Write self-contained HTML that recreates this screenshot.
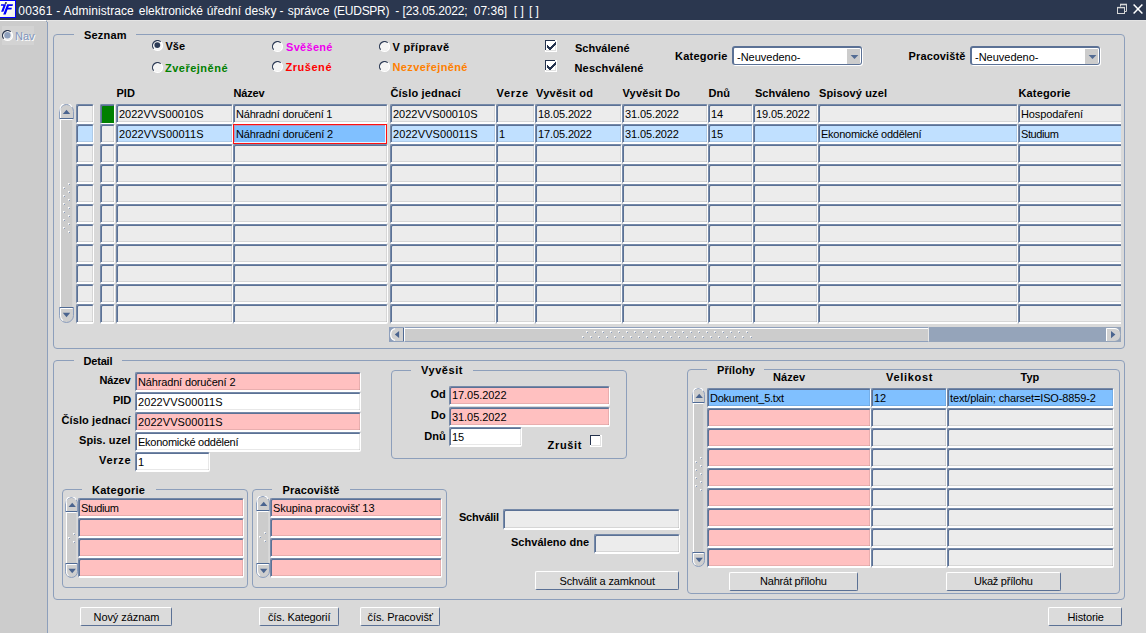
<!DOCTYPE html>
<html lang="cs"><head><meta charset="utf-8"><title>00361 - Administrace elektronické úřední desky</title>
<style>
html,body{margin:0;padding:0}
body{width:1146px;height:633px;overflow:hidden;background:#d9d9d9;position:relative;font-family:"Liberation Sans",sans-serif;}
div,svg,span{position:absolute;}
.f{box-sizing:border-box;border-style:solid;border-width:1px 1px 2px 1px;border-color:#7589a8 #fff #fff #7589a8;box-shadow:inset 1px 1px 0 #5b7195,inset -1px 0 0 rgba(0,0,0,.09),inset 0 -1px 0 rgba(0,0,0,.09);border-radius:2px;}
.g{box-sizing:border-box;border:1px solid #8d9fbb;border-radius:4px;}
.b{box-sizing:border-box;background:#dbdbdb;border-top:1px solid #fff;border-left:1px solid #fff;border-right:1px solid #5b7195;border-bottom:1px solid #5b7195;border-radius:2px;}
.cb{box-sizing:border-box;background:#fff;border-style:solid;border-color:#5b7195;border-width:2px 1px 1px 2px;border-radius:3px;box-shadow:1px 1px 0 #fff;}
.cbb{right:1px;top:1px;width:13px;height:15px;background:#cccccc;}
.t{white-space:pre;line-height:20px;height:20px;}
</style></head>
<body>
<div style="left:0px;top:0px;width:1146px;height:20px;background:#2b374f"></div>
<svg style="left:0;top:0" width="17" height="19" viewBox="0 0 17 19"><defs><linearGradient id="ig" x1="0" y1="0" x2="1" y2="1"><stop offset="0" stop-color="#fffff2"/><stop offset=".55" stop-color="#fdfdf0"/><stop offset="1" stop-color="#eeeeee"/></linearGradient></defs><rect x="0" y="0" width="16" height="18" fill="#0000ff"/><rect x="0" y="1" width="15" height="16" fill="url(#ig)"/><path d="M1.1 4.3 H6.1 L5.6 5.7 H0.8 Z M3.9 4.6 H6 L3.4 11.7 H1.1 Z" fill="#0000ff"/><path d="M5.1 2.2 H6.9 L6.5 3.7 H4.7 Z" fill="#00003a"/><path d="M7.3 4.2 H13 L12.5 5.9 H6.7 Z M7.2 4.2 H9.5 L5.7 14.6 H3.2 Z M6.5 7.8 H11.9 L11.4 9.4 H5.9 Z" fill="#0000ff"/></svg>
<svg style="left:1116px;top:3px" width="28" height="13" viewBox="0 0 28 13"><path d="M4.5 3.5 V1.5 H10.5 V8.5 H8.5" stroke="#d6d6d6" stroke-width="1" fill="none"/><path d="M4 1.5 H11" stroke="#d6d6d6" stroke-width="1.6"/><rect x="1.5" y="4.5" width="7" height="6" stroke="#d6d6d6" stroke-width="1" fill="none"/><path d="M1 4.6 H9" stroke="#d6d6d6" stroke-width="1.4"/><path d="M17.6 1.4 L26.4 10.6 M26.4 1.4 L17.6 10.6" stroke="#fff" stroke-width="1.5" fill="none"/></svg>
<div style="left:0px;top:20px;width:47px;height:613px;background:#cccccc"></div>
<div style="left:0px;top:20px;width:46px;height:1px;background:#fff"></div>
<div style="left:47px;top:20px;width:1099px;height:1px;background:#e4e4e4"></div>
<div style="left:47px;top:22px;width:1px;height:611px;background:#8d9fbb"></div>
<div style="left:46px;top:21px;width:1px;height:1px;background:#8d9fbb"></div>
<div style="left:2px;top:26px;width:32px;height:19px;background:#d3d3d3"></div>
<svg style="left:2px;top:30px" width="12" height="12" viewBox="0 0 12 12"><circle cx="5.5" cy="5.5" r="4.6" fill="#f2f2f2"/><path d="M8.71 1.67 A5 5 0 1 1 1.67 8.71" fill="none" stroke="#fff" stroke-width="1.2"/><path d="M1.67 8.71 A5 5 0 0 1 8.71 1.67" fill="none" stroke="#24324d" stroke-width="1.15"/><circle cx="5.4" cy="5.3" r="3.2" fill="#8fa1be"/></svg>
<div class="g" style="left:53px;top:34px;width:1072px;height:315px"></div>
<div style="left:74px;top:34px;width:62px;height:2px;background:#d9d9d9"></div>
<svg style="left:152px;top:40px" width="12" height="12" viewBox="0 0 12 12"><circle cx="5.5" cy="5.5" r="4.6" fill="#f4f4f4"/><path d="M8.71 1.67 A5 5 0 1 1 1.67 8.71" fill="none" stroke="#fff" stroke-width="1.2"/><path d="M1.67 8.71 A5 5 0 0 1 8.71 1.67" fill="none" stroke="#2b3a55" stroke-width="1.15"/><circle cx="5.3" cy="5.1" r="2.95" fill="#2b3a55"/></svg>
<svg style="left:152px;top:62px" width="12" height="12" viewBox="0 0 12 12"><circle cx="5.5" cy="5.5" r="4.6" fill="#f4f4f4"/><path d="M8.71 1.67 A5 5 0 1 1 1.67 8.71" fill="none" stroke="#fff" stroke-width="1.2"/><path d="M1.67 8.71 A5 5 0 0 1 8.71 1.67" fill="none" stroke="#2b3a55" stroke-width="1.15"/></svg>
<svg style="left:272px;top:41px" width="12" height="12" viewBox="0 0 12 12"><circle cx="5.5" cy="5.5" r="4.6" fill="#f4f4f4"/><path d="M8.71 1.67 A5 5 0 1 1 1.67 8.71" fill="none" stroke="#fff" stroke-width="1.2"/><path d="M1.67 8.71 A5 5 0 0 1 8.71 1.67" fill="none" stroke="#2b3a55" stroke-width="1.15"/></svg>
<svg style="left:272px;top:61px" width="12" height="12" viewBox="0 0 12 12"><circle cx="5.5" cy="5.5" r="4.6" fill="#f4f4f4"/><path d="M8.71 1.67 A5 5 0 1 1 1.67 8.71" fill="none" stroke="#fff" stroke-width="1.2"/><path d="M1.67 8.71 A5 5 0 0 1 8.71 1.67" fill="none" stroke="#2b3a55" stroke-width="1.15"/></svg>
<svg style="left:379px;top:41px" width="12" height="12" viewBox="0 0 12 12"><circle cx="5.5" cy="5.5" r="4.6" fill="#f4f4f4"/><path d="M8.71 1.67 A5 5 0 1 1 1.67 8.71" fill="none" stroke="#fff" stroke-width="1.2"/><path d="M1.67 8.71 A5 5 0 0 1 8.71 1.67" fill="none" stroke="#2b3a55" stroke-width="1.15"/></svg>
<svg style="left:379px;top:61px" width="12" height="12" viewBox="0 0 12 12"><circle cx="5.5" cy="5.5" r="4.6" fill="#f4f4f4"/><path d="M8.71 1.67 A5 5 0 1 1 1.67 8.71" fill="none" stroke="#fff" stroke-width="1.2"/><path d="M1.67 8.71 A5 5 0 0 1 8.71 1.67" fill="none" stroke="#2b3a55" stroke-width="1.15"/></svg>
<svg style="left:545px;top:40px" width="12" height="12" viewBox="0 0 12 12" shape-rendering="crispEdges"><rect x="0" y="0" width="12" height="12" fill="#fff"/><rect x="1" y="10" width="10" height="1" fill="#e2e2e2"/><rect x="10" y="1" width="1" height="10" fill="#e2e2e2"/><rect x="0" y="0" width="10" height="1" fill="#24324d"/><rect x="0" y="0" width="1" height="10" fill="#24324d"/><rect x="2" y="5" width="1" height="3" fill="#24324d"/><rect x="3" y="6" width="1" height="3" fill="#24324d"/><rect x="4" y="7" width="1" height="3" fill="#24324d"/><rect x="5" y="7" width="1" height="3" fill="#24324d"/><rect x="6" y="6" width="1" height="3" fill="#24324d"/><rect x="7" y="5" width="1" height="3" fill="#24324d"/><rect x="8" y="4" width="1" height="3" fill="#24324d"/><rect x="9" y="3" width="1" height="3" fill="#24324d"/><rect x="10" y="2" width="1" height="3" fill="#24324d"/></svg>
<svg style="left:545px;top:60px" width="12" height="12" viewBox="0 0 12 12" shape-rendering="crispEdges"><rect x="0" y="0" width="12" height="12" fill="#fff"/><rect x="1" y="10" width="10" height="1" fill="#e2e2e2"/><rect x="10" y="1" width="1" height="10" fill="#e2e2e2"/><rect x="0" y="0" width="10" height="1" fill="#24324d"/><rect x="0" y="0" width="1" height="10" fill="#24324d"/><rect x="2" y="5" width="1" height="3" fill="#24324d"/><rect x="3" y="6" width="1" height="3" fill="#24324d"/><rect x="4" y="7" width="1" height="3" fill="#24324d"/><rect x="5" y="7" width="1" height="3" fill="#24324d"/><rect x="6" y="6" width="1" height="3" fill="#24324d"/><rect x="7" y="5" width="1" height="3" fill="#24324d"/><rect x="8" y="4" width="1" height="3" fill="#24324d"/><rect x="9" y="3" width="1" height="3" fill="#24324d"/><rect x="10" y="2" width="1" height="3" fill="#24324d"/></svg>
<div class="cb" style="left:732px;top:46px;width:130px;height:19px"><div class="cbb"><svg width="13" height="15" viewBox="0 0 13 15" style="left:0;top:0"><path d="M3.6 6 H11.4 L7.5 10.1 Z" fill="#536c94"/></svg></div></div>
<div class="cb" style="left:970px;top:46px;width:130px;height:19px"><div class="cbb"><svg width="13" height="15" viewBox="0 0 13 15" style="left:0;top:0"><path d="M3.6 6 H11.4 L7.5 10.1 Z" fill="#536c94"/></svg></div></div>
<div class="f" style="left:76px;top:104px;width:18px;height:20px;background:#ececec"></div>
<div class="f" style="left:100px;top:104px;width:15px;height:20px;background:#008000;box-shadow:inset 1px 1px 0 #5b7195;border-bottom-width:1px"></div>
<div class="f" style="left:116px;top:104px;width:117px;height:20px;background:#ececec"></div>
<div class="f" style="left:233px;top:104px;width:155px;height:20px;background:#ececec"></div>
<div class="f" style="left:390px;top:104px;width:106px;height:20px;background:#ececec"></div>
<div class="f" style="left:496px;top:104px;width:39px;height:20px;background:#ececec"></div>
<div class="f" style="left:535px;top:104px;width:87px;height:20px;background:#ececec"></div>
<div class="f" style="left:622px;top:104px;width:86px;height:20px;background:#ececec"></div>
<div class="f" style="left:708px;top:104px;width:45px;height:20px;background:#ececec"></div>
<div class="f" style="left:753px;top:104px;width:65px;height:20px;background:#ececec"></div>
<div class="f" style="left:818px;top:104px;width:200px;height:20px;background:#ececec"></div>
<div style="left:1018px;top:104px;width:103px;height:20px;overflow:hidden"><div class="f" style="left:0;top:0;width:120px;height:20px;background:#ececec"></div></div>
<div class="f" style="left:76px;top:124px;width:18px;height:20px;background:#c0e0ff"></div>
<div class="f" style="left:100px;top:124px;width:15px;height:20px;background:#ececec"></div>
<div class="f" style="left:116px;top:124px;width:117px;height:20px;background:#c0e0ff"></div>
<div style="left:233px;top:124px;width:154px;height:20px;background:#80c0ff;box-sizing:border-box;border:1px solid #ff1010;box-shadow:inset -1px -1px 0 #eaf4ff,inset 1px 1px 0 rgba(255,80,80,.35)"></div>
<div class="f" style="left:390px;top:124px;width:106px;height:20px;background:#c0e0ff"></div>
<div class="f" style="left:496px;top:124px;width:39px;height:20px;background:#c0e0ff"></div>
<div class="f" style="left:535px;top:124px;width:87px;height:20px;background:#c0e0ff"></div>
<div class="f" style="left:622px;top:124px;width:86px;height:20px;background:#c0e0ff"></div>
<div class="f" style="left:708px;top:124px;width:45px;height:20px;background:#c0e0ff"></div>
<div class="f" style="left:753px;top:124px;width:65px;height:20px;background:#c0e0ff"></div>
<div class="f" style="left:818px;top:124px;width:200px;height:20px;background:#c0e0ff"></div>
<div style="left:1018px;top:124px;width:103px;height:20px;overflow:hidden"><div class="f" style="left:0;top:0;width:120px;height:20px;background:#c0e0ff"></div></div>
<div class="f" style="left:76px;top:144px;width:18px;height:20px;background:#ececec"></div>
<div class="f" style="left:100px;top:144px;width:15px;height:20px;background:#ececec"></div>
<div class="f" style="left:116px;top:144px;width:117px;height:20px;background:#ececec"></div>
<div class="f" style="left:233px;top:144px;width:155px;height:20px;background:#ececec"></div>
<div class="f" style="left:390px;top:144px;width:106px;height:20px;background:#ececec"></div>
<div class="f" style="left:496px;top:144px;width:39px;height:20px;background:#ececec"></div>
<div class="f" style="left:535px;top:144px;width:87px;height:20px;background:#ececec"></div>
<div class="f" style="left:622px;top:144px;width:86px;height:20px;background:#ececec"></div>
<div class="f" style="left:708px;top:144px;width:45px;height:20px;background:#ececec"></div>
<div class="f" style="left:753px;top:144px;width:65px;height:20px;background:#ececec"></div>
<div class="f" style="left:818px;top:144px;width:200px;height:20px;background:#ececec"></div>
<div style="left:1018px;top:144px;width:103px;height:20px;overflow:hidden"><div class="f" style="left:0;top:0;width:120px;height:20px;background:#ececec"></div></div>
<div class="f" style="left:76px;top:164px;width:18px;height:20px;background:#ececec"></div>
<div class="f" style="left:100px;top:164px;width:15px;height:20px;background:#ececec"></div>
<div class="f" style="left:116px;top:164px;width:117px;height:20px;background:#ececec"></div>
<div class="f" style="left:233px;top:164px;width:155px;height:20px;background:#ececec"></div>
<div class="f" style="left:390px;top:164px;width:106px;height:20px;background:#ececec"></div>
<div class="f" style="left:496px;top:164px;width:39px;height:20px;background:#ececec"></div>
<div class="f" style="left:535px;top:164px;width:87px;height:20px;background:#ececec"></div>
<div class="f" style="left:622px;top:164px;width:86px;height:20px;background:#ececec"></div>
<div class="f" style="left:708px;top:164px;width:45px;height:20px;background:#ececec"></div>
<div class="f" style="left:753px;top:164px;width:65px;height:20px;background:#ececec"></div>
<div class="f" style="left:818px;top:164px;width:200px;height:20px;background:#ececec"></div>
<div style="left:1018px;top:164px;width:103px;height:20px;overflow:hidden"><div class="f" style="left:0;top:0;width:120px;height:20px;background:#ececec"></div></div>
<div class="f" style="left:76px;top:184px;width:18px;height:20px;background:#ececec"></div>
<div class="f" style="left:100px;top:184px;width:15px;height:20px;background:#ececec"></div>
<div class="f" style="left:116px;top:184px;width:117px;height:20px;background:#ececec"></div>
<div class="f" style="left:233px;top:184px;width:155px;height:20px;background:#ececec"></div>
<div class="f" style="left:390px;top:184px;width:106px;height:20px;background:#ececec"></div>
<div class="f" style="left:496px;top:184px;width:39px;height:20px;background:#ececec"></div>
<div class="f" style="left:535px;top:184px;width:87px;height:20px;background:#ececec"></div>
<div class="f" style="left:622px;top:184px;width:86px;height:20px;background:#ececec"></div>
<div class="f" style="left:708px;top:184px;width:45px;height:20px;background:#ececec"></div>
<div class="f" style="left:753px;top:184px;width:65px;height:20px;background:#ececec"></div>
<div class="f" style="left:818px;top:184px;width:200px;height:20px;background:#ececec"></div>
<div style="left:1018px;top:184px;width:103px;height:20px;overflow:hidden"><div class="f" style="left:0;top:0;width:120px;height:20px;background:#ececec"></div></div>
<div class="f" style="left:76px;top:204px;width:18px;height:20px;background:#ececec"></div>
<div class="f" style="left:100px;top:204px;width:15px;height:20px;background:#ececec"></div>
<div class="f" style="left:116px;top:204px;width:117px;height:20px;background:#ececec"></div>
<div class="f" style="left:233px;top:204px;width:155px;height:20px;background:#ececec"></div>
<div class="f" style="left:390px;top:204px;width:106px;height:20px;background:#ececec"></div>
<div class="f" style="left:496px;top:204px;width:39px;height:20px;background:#ececec"></div>
<div class="f" style="left:535px;top:204px;width:87px;height:20px;background:#ececec"></div>
<div class="f" style="left:622px;top:204px;width:86px;height:20px;background:#ececec"></div>
<div class="f" style="left:708px;top:204px;width:45px;height:20px;background:#ececec"></div>
<div class="f" style="left:753px;top:204px;width:65px;height:20px;background:#ececec"></div>
<div class="f" style="left:818px;top:204px;width:200px;height:20px;background:#ececec"></div>
<div style="left:1018px;top:204px;width:103px;height:20px;overflow:hidden"><div class="f" style="left:0;top:0;width:120px;height:20px;background:#ececec"></div></div>
<div class="f" style="left:76px;top:224px;width:18px;height:20px;background:#ececec"></div>
<div class="f" style="left:100px;top:224px;width:15px;height:20px;background:#ececec"></div>
<div class="f" style="left:116px;top:224px;width:117px;height:20px;background:#ececec"></div>
<div class="f" style="left:233px;top:224px;width:155px;height:20px;background:#ececec"></div>
<div class="f" style="left:390px;top:224px;width:106px;height:20px;background:#ececec"></div>
<div class="f" style="left:496px;top:224px;width:39px;height:20px;background:#ececec"></div>
<div class="f" style="left:535px;top:224px;width:87px;height:20px;background:#ececec"></div>
<div class="f" style="left:622px;top:224px;width:86px;height:20px;background:#ececec"></div>
<div class="f" style="left:708px;top:224px;width:45px;height:20px;background:#ececec"></div>
<div class="f" style="left:753px;top:224px;width:65px;height:20px;background:#ececec"></div>
<div class="f" style="left:818px;top:224px;width:200px;height:20px;background:#ececec"></div>
<div style="left:1018px;top:224px;width:103px;height:20px;overflow:hidden"><div class="f" style="left:0;top:0;width:120px;height:20px;background:#ececec"></div></div>
<div class="f" style="left:76px;top:244px;width:18px;height:20px;background:#ececec"></div>
<div class="f" style="left:100px;top:244px;width:15px;height:20px;background:#ececec"></div>
<div class="f" style="left:116px;top:244px;width:117px;height:20px;background:#ececec"></div>
<div class="f" style="left:233px;top:244px;width:155px;height:20px;background:#ececec"></div>
<div class="f" style="left:390px;top:244px;width:106px;height:20px;background:#ececec"></div>
<div class="f" style="left:496px;top:244px;width:39px;height:20px;background:#ececec"></div>
<div class="f" style="left:535px;top:244px;width:87px;height:20px;background:#ececec"></div>
<div class="f" style="left:622px;top:244px;width:86px;height:20px;background:#ececec"></div>
<div class="f" style="left:708px;top:244px;width:45px;height:20px;background:#ececec"></div>
<div class="f" style="left:753px;top:244px;width:65px;height:20px;background:#ececec"></div>
<div class="f" style="left:818px;top:244px;width:200px;height:20px;background:#ececec"></div>
<div style="left:1018px;top:244px;width:103px;height:20px;overflow:hidden"><div class="f" style="left:0;top:0;width:120px;height:20px;background:#ececec"></div></div>
<div class="f" style="left:76px;top:264px;width:18px;height:20px;background:#ececec"></div>
<div class="f" style="left:100px;top:264px;width:15px;height:20px;background:#ececec"></div>
<div class="f" style="left:116px;top:264px;width:117px;height:20px;background:#ececec"></div>
<div class="f" style="left:233px;top:264px;width:155px;height:20px;background:#ececec"></div>
<div class="f" style="left:390px;top:264px;width:106px;height:20px;background:#ececec"></div>
<div class="f" style="left:496px;top:264px;width:39px;height:20px;background:#ececec"></div>
<div class="f" style="left:535px;top:264px;width:87px;height:20px;background:#ececec"></div>
<div class="f" style="left:622px;top:264px;width:86px;height:20px;background:#ececec"></div>
<div class="f" style="left:708px;top:264px;width:45px;height:20px;background:#ececec"></div>
<div class="f" style="left:753px;top:264px;width:65px;height:20px;background:#ececec"></div>
<div class="f" style="left:818px;top:264px;width:200px;height:20px;background:#ececec"></div>
<div style="left:1018px;top:264px;width:103px;height:20px;overflow:hidden"><div class="f" style="left:0;top:0;width:120px;height:20px;background:#ececec"></div></div>
<div class="f" style="left:76px;top:284px;width:18px;height:20px;background:#ececec"></div>
<div class="f" style="left:100px;top:284px;width:15px;height:20px;background:#ececec"></div>
<div class="f" style="left:116px;top:284px;width:117px;height:20px;background:#ececec"></div>
<div class="f" style="left:233px;top:284px;width:155px;height:20px;background:#ececec"></div>
<div class="f" style="left:390px;top:284px;width:106px;height:20px;background:#ececec"></div>
<div class="f" style="left:496px;top:284px;width:39px;height:20px;background:#ececec"></div>
<div class="f" style="left:535px;top:284px;width:87px;height:20px;background:#ececec"></div>
<div class="f" style="left:622px;top:284px;width:86px;height:20px;background:#ececec"></div>
<div class="f" style="left:708px;top:284px;width:45px;height:20px;background:#ececec"></div>
<div class="f" style="left:753px;top:284px;width:65px;height:20px;background:#ececec"></div>
<div class="f" style="left:818px;top:284px;width:200px;height:20px;background:#ececec"></div>
<div style="left:1018px;top:284px;width:103px;height:20px;overflow:hidden"><div class="f" style="left:0;top:0;width:120px;height:20px;background:#ececec"></div></div>
<div class="f" style="left:76px;top:304px;width:18px;height:20px;background:#ececec"></div>
<div class="f" style="left:100px;top:304px;width:15px;height:20px;background:#ececec"></div>
<div class="f" style="left:116px;top:304px;width:117px;height:20px;background:#ececec"></div>
<div class="f" style="left:233px;top:304px;width:155px;height:20px;background:#ececec"></div>
<div class="f" style="left:390px;top:304px;width:106px;height:20px;background:#ececec"></div>
<div class="f" style="left:496px;top:304px;width:39px;height:20px;background:#ececec"></div>
<div class="f" style="left:535px;top:304px;width:87px;height:20px;background:#ececec"></div>
<div class="f" style="left:622px;top:304px;width:86px;height:20px;background:#ececec"></div>
<div class="f" style="left:708px;top:304px;width:45px;height:20px;background:#ececec"></div>
<div class="f" style="left:753px;top:304px;width:65px;height:20px;background:#ececec"></div>
<div class="f" style="left:818px;top:304px;width:200px;height:20px;background:#ececec"></div>
<div style="left:1018px;top:304px;width:103px;height:20px;overflow:hidden"><div class="f" style="left:0;top:0;width:120px;height:20px;background:#ececec"></div></div>
<div style="left:60px;top:119px;width:13px;height:188px;background:#cccccc;box-sizing:border-box;border-left:1px solid #fff;border-top:1px solid #fff;border-right:1px solid #d6d6d6"></div>
<svg style="left:59px;top:104px" width="15" height="15" viewBox="0 0 15 15"><path d="M0.5 15 V7.5 A7.0 7.0 0 0 1 14.5 7.5 V15 Z" fill="#cecece" stroke="#8a9dbd" stroke-width="1"/><path d="M1.5 14 V7.5 A6.0 6.0 0 0 1 12.75 3.1" fill="none" stroke="#fff" stroke-width="1.1"/><path d="M1 14.5 H14" stroke="#4f6a94" stroke-width="1"/><path d="M3.8 10.1 H11.2 L7.5 5.7 Z" fill="#4a648f"/></svg>
<svg style="left:59px;top:307px" width="15" height="16" viewBox="0 0 15 16"><path d="M0.5 0 V8.5 A7.0 7.0 0 0 0 14.5 8.5 V0 Z" fill="#cecece" stroke="#8a9dbd" stroke-width="1"/><path d="M1.5 1.5 V8.5 A6.0 6.0 0 0 0 4.0 13.6" fill="none" stroke="#fff" stroke-width="1.1"/><path d="M1 0.5 H14" stroke="#4f6a94" stroke-width="1"/><path d="M1.5 1.5 H13.5" stroke="#fff" stroke-width="1"/><path d="M3.8 5.8 H11.2 L7.5 10.2 Z" fill="#4a648f"/></svg>
<svg style="left:59px;top:104px" width="15" height="219" viewBox="0 0 15 219"><rect x="9" y="79" width="2" height="2" fill="#e6e6e6"/><rect x="9" y="79" width="1" height="1" fill="#fff"/><rect x="10" y="80" width="1" height="1" fill="#8a9cba"/><rect x="4" y="83" width="2" height="2" fill="#e6e6e6"/><rect x="4" y="83" width="1" height="1" fill="#fff"/><rect x="5" y="84" width="1" height="1" fill="#8a9cba"/><rect x="9" y="87" width="2" height="2" fill="#e6e6e6"/><rect x="9" y="87" width="1" height="1" fill="#fff"/><rect x="10" y="88" width="1" height="1" fill="#8a9cba"/><rect x="4" y="91" width="2" height="2" fill="#e6e6e6"/><rect x="4" y="91" width="1" height="1" fill="#fff"/><rect x="5" y="92" width="1" height="1" fill="#8a9cba"/><rect x="9" y="95" width="2" height="2" fill="#e6e6e6"/><rect x="9" y="95" width="1" height="1" fill="#fff"/><rect x="10" y="96" width="1" height="1" fill="#8a9cba"/><rect x="4" y="99" width="2" height="2" fill="#e6e6e6"/><rect x="4" y="99" width="1" height="1" fill="#fff"/><rect x="5" y="100" width="1" height="1" fill="#8a9cba"/><rect x="9" y="103" width="2" height="2" fill="#e6e6e6"/><rect x="9" y="103" width="1" height="1" fill="#fff"/><rect x="10" y="104" width="1" height="1" fill="#8a9cba"/><rect x="4" y="107" width="2" height="2" fill="#e6e6e6"/><rect x="4" y="107" width="1" height="1" fill="#fff"/><rect x="5" y="108" width="1" height="1" fill="#8a9cba"/><rect x="9" y="111" width="2" height="2" fill="#e6e6e6"/><rect x="9" y="111" width="1" height="1" fill="#fff"/><rect x="10" y="112" width="1" height="1" fill="#8a9cba"/><rect x="4" y="115" width="2" height="2" fill="#e6e6e6"/><rect x="4" y="115" width="1" height="1" fill="#fff"/><rect x="5" y="116" width="1" height="1" fill="#8a9cba"/><rect x="9" y="119" width="2" height="2" fill="#e6e6e6"/><rect x="9" y="119" width="1" height="1" fill="#fff"/><rect x="10" y="120" width="1" height="1" fill="#8a9cba"/><rect x="4" y="123" width="2" height="2" fill="#e6e6e6"/><rect x="4" y="123" width="1" height="1" fill="#fff"/><rect x="5" y="124" width="1" height="1" fill="#8a9cba"/><rect x="9" y="127" width="2" height="2" fill="#e6e6e6"/><rect x="9" y="127" width="1" height="1" fill="#fff"/><rect x="10" y="128" width="1" height="1" fill="#8a9cba"/></svg>
<div style="left:389px;top:327px;width:732px;height:15px;background:#95a4ba"></div>
<div style="left:404px;top:327px;width:525px;height:15px;background:#cccccc;box-sizing:border-box;border-top:1px solid #8fa0bc;border-bottom:1px solid #8fa0bc;border-left:1px solid #fff;border-right:1px solid #e8e8e8;box-shadow:inset 0 1px 0 #fff"></div>
<svg style="left:389px;top:327px" width="15" height="15" viewBox="0 0 15 15"><rect width="15" height="15" fill="#8fa0bc"/><path d="M14 1 H7 Q1.2 1.6 1.2 7.5 Q1.2 13.4 7 14 H14 Z" fill="#d0d0d0"/><path d="M6.2 1.7 Q1.7 2.4 1.7 7.5 Q1.7 12.6 6.2 13.3" fill="none" stroke="#fff" stroke-width="1.2"/><path d="M14.5 1 V14" stroke="#4f6a94" stroke-width="1"/><path d="M10.1 3.9 V11.1 L5.8 7.5 Z" fill="#4a648f"/></svg>
<svg style="left:1106px;top:327px" width="15" height="15" viewBox="0 0 15 15"><path d="M0 1 H9 Q14.2 1.6 14.2 7.5 Q14.2 13.4 9 14 H0 Z" fill="#d0d0d0"/><path d="M0.5 14 V1.5 H9 Q11.5 1.8 12.6 3.2" fill="none" stroke="#fff" stroke-width="1"/><path d="M5 4 V11.2 L9.4 7.6 Z" fill="#4a648f"/></svg>
<svg style="left:389px;top:327px" width="732" height="15" viewBox="0 0 732 15"><rect x="193" y="9" width="2" height="2" fill="#e6e6e6"/><rect x="193" y="9" width="1" height="1" fill="#fff"/><rect x="194" y="10" width="1" height="1" fill="#8a9cba"/><rect x="197" y="4" width="2" height="2" fill="#e6e6e6"/><rect x="197" y="4" width="1" height="1" fill="#fff"/><rect x="198" y="5" width="1" height="1" fill="#8a9cba"/><rect x="201" y="9" width="2" height="2" fill="#e6e6e6"/><rect x="201" y="9" width="1" height="1" fill="#fff"/><rect x="202" y="10" width="1" height="1" fill="#8a9cba"/><rect x="205" y="4" width="2" height="2" fill="#e6e6e6"/><rect x="205" y="4" width="1" height="1" fill="#fff"/><rect x="206" y="5" width="1" height="1" fill="#8a9cba"/><rect x="209" y="9" width="2" height="2" fill="#e6e6e6"/><rect x="209" y="9" width="1" height="1" fill="#fff"/><rect x="210" y="10" width="1" height="1" fill="#8a9cba"/><rect x="213" y="4" width="2" height="2" fill="#e6e6e6"/><rect x="213" y="4" width="1" height="1" fill="#fff"/><rect x="214" y="5" width="1" height="1" fill="#8a9cba"/><rect x="217" y="9" width="2" height="2" fill="#e6e6e6"/><rect x="217" y="9" width="1" height="1" fill="#fff"/><rect x="218" y="10" width="1" height="1" fill="#8a9cba"/><rect x="221" y="4" width="2" height="2" fill="#e6e6e6"/><rect x="221" y="4" width="1" height="1" fill="#fff"/><rect x="222" y="5" width="1" height="1" fill="#8a9cba"/><rect x="225" y="9" width="2" height="2" fill="#e6e6e6"/><rect x="225" y="9" width="1" height="1" fill="#fff"/><rect x="226" y="10" width="1" height="1" fill="#8a9cba"/><rect x="229" y="4" width="2" height="2" fill="#e6e6e6"/><rect x="229" y="4" width="1" height="1" fill="#fff"/><rect x="230" y="5" width="1" height="1" fill="#8a9cba"/><rect x="233" y="9" width="2" height="2" fill="#e6e6e6"/><rect x="233" y="9" width="1" height="1" fill="#fff"/><rect x="234" y="10" width="1" height="1" fill="#8a9cba"/><rect x="237" y="4" width="2" height="2" fill="#e6e6e6"/><rect x="237" y="4" width="1" height="1" fill="#fff"/><rect x="238" y="5" width="1" height="1" fill="#8a9cba"/><rect x="241" y="9" width="2" height="2" fill="#e6e6e6"/><rect x="241" y="9" width="1" height="1" fill="#fff"/><rect x="242" y="10" width="1" height="1" fill="#8a9cba"/><rect x="245" y="4" width="2" height="2" fill="#e6e6e6"/><rect x="245" y="4" width="1" height="1" fill="#fff"/><rect x="246" y="5" width="1" height="1" fill="#8a9cba"/><rect x="249" y="9" width="2" height="2" fill="#e6e6e6"/><rect x="249" y="9" width="1" height="1" fill="#fff"/><rect x="250" y="10" width="1" height="1" fill="#8a9cba"/><rect x="253" y="4" width="2" height="2" fill="#e6e6e6"/><rect x="253" y="4" width="1" height="1" fill="#fff"/><rect x="254" y="5" width="1" height="1" fill="#8a9cba"/><rect x="257" y="9" width="2" height="2" fill="#e6e6e6"/><rect x="257" y="9" width="1" height="1" fill="#fff"/><rect x="258" y="10" width="1" height="1" fill="#8a9cba"/><rect x="261" y="4" width="2" height="2" fill="#e6e6e6"/><rect x="261" y="4" width="1" height="1" fill="#fff"/><rect x="262" y="5" width="1" height="1" fill="#8a9cba"/><rect x="265" y="9" width="2" height="2" fill="#e6e6e6"/><rect x="265" y="9" width="1" height="1" fill="#fff"/><rect x="266" y="10" width="1" height="1" fill="#8a9cba"/><rect x="269" y="4" width="2" height="2" fill="#e6e6e6"/><rect x="269" y="4" width="1" height="1" fill="#fff"/><rect x="270" y="5" width="1" height="1" fill="#8a9cba"/><rect x="273" y="9" width="2" height="2" fill="#e6e6e6"/><rect x="273" y="9" width="1" height="1" fill="#fff"/><rect x="274" y="10" width="1" height="1" fill="#8a9cba"/><rect x="277" y="4" width="2" height="2" fill="#e6e6e6"/><rect x="277" y="4" width="1" height="1" fill="#fff"/><rect x="278" y="5" width="1" height="1" fill="#8a9cba"/><rect x="281" y="9" width="2" height="2" fill="#e6e6e6"/><rect x="281" y="9" width="1" height="1" fill="#fff"/><rect x="282" y="10" width="1" height="1" fill="#8a9cba"/><rect x="285" y="4" width="2" height="2" fill="#e6e6e6"/><rect x="285" y="4" width="1" height="1" fill="#fff"/><rect x="286" y="5" width="1" height="1" fill="#8a9cba"/><rect x="289" y="9" width="2" height="2" fill="#e6e6e6"/><rect x="289" y="9" width="1" height="1" fill="#fff"/><rect x="290" y="10" width="1" height="1" fill="#8a9cba"/><rect x="293" y="4" width="2" height="2" fill="#e6e6e6"/><rect x="293" y="4" width="1" height="1" fill="#fff"/><rect x="294" y="5" width="1" height="1" fill="#8a9cba"/><rect x="297" y="9" width="2" height="2" fill="#e6e6e6"/><rect x="297" y="9" width="1" height="1" fill="#fff"/><rect x="298" y="10" width="1" height="1" fill="#8a9cba"/><rect x="301" y="4" width="2" height="2" fill="#e6e6e6"/><rect x="301" y="4" width="1" height="1" fill="#fff"/><rect x="302" y="5" width="1" height="1" fill="#8a9cba"/><rect x="305" y="9" width="2" height="2" fill="#e6e6e6"/><rect x="305" y="9" width="1" height="1" fill="#fff"/><rect x="306" y="10" width="1" height="1" fill="#8a9cba"/><rect x="309" y="4" width="2" height="2" fill="#e6e6e6"/><rect x="309" y="4" width="1" height="1" fill="#fff"/><rect x="310" y="5" width="1" height="1" fill="#8a9cba"/><rect x="313" y="9" width="2" height="2" fill="#e6e6e6"/><rect x="313" y="9" width="1" height="1" fill="#fff"/><rect x="314" y="10" width="1" height="1" fill="#8a9cba"/><rect x="317" y="4" width="2" height="2" fill="#e6e6e6"/><rect x="317" y="4" width="1" height="1" fill="#fff"/><rect x="318" y="5" width="1" height="1" fill="#8a9cba"/><rect x="321" y="9" width="2" height="2" fill="#e6e6e6"/><rect x="321" y="9" width="1" height="1" fill="#fff"/><rect x="322" y="10" width="1" height="1" fill="#8a9cba"/><rect x="325" y="4" width="2" height="2" fill="#e6e6e6"/><rect x="325" y="4" width="1" height="1" fill="#fff"/><rect x="326" y="5" width="1" height="1" fill="#8a9cba"/><rect x="329" y="9" width="2" height="2" fill="#e6e6e6"/><rect x="329" y="9" width="1" height="1" fill="#fff"/><rect x="330" y="10" width="1" height="1" fill="#8a9cba"/><rect x="333" y="4" width="2" height="2" fill="#e6e6e6"/><rect x="333" y="4" width="1" height="1" fill="#fff"/><rect x="334" y="5" width="1" height="1" fill="#8a9cba"/><rect x="337" y="9" width="2" height="2" fill="#e6e6e6"/><rect x="337" y="9" width="1" height="1" fill="#fff"/><rect x="338" y="10" width="1" height="1" fill="#8a9cba"/><rect x="341" y="4" width="2" height="2" fill="#e6e6e6"/><rect x="341" y="4" width="1" height="1" fill="#fff"/><rect x="342" y="5" width="1" height="1" fill="#8a9cba"/><rect x="345" y="9" width="2" height="2" fill="#e6e6e6"/><rect x="345" y="9" width="1" height="1" fill="#fff"/><rect x="346" y="10" width="1" height="1" fill="#8a9cba"/><rect x="349" y="4" width="2" height="2" fill="#e6e6e6"/><rect x="349" y="4" width="1" height="1" fill="#fff"/><rect x="350" y="5" width="1" height="1" fill="#8a9cba"/><rect x="353" y="9" width="2" height="2" fill="#e6e6e6"/><rect x="353" y="9" width="1" height="1" fill="#fff"/><rect x="354" y="10" width="1" height="1" fill="#8a9cba"/><rect x="357" y="4" width="2" height="2" fill="#e6e6e6"/><rect x="357" y="4" width="1" height="1" fill="#fff"/><rect x="358" y="5" width="1" height="1" fill="#8a9cba"/><rect x="361" y="9" width="2" height="2" fill="#e6e6e6"/><rect x="361" y="9" width="1" height="1" fill="#fff"/><rect x="362" y="10" width="1" height="1" fill="#8a9cba"/></svg>
<div class="g" style="left:53px;top:360px;width:1072px;height:240px"></div>
<div style="left:74px;top:360px;width:48px;height:2px;background:#d9d9d9"></div>
<div class="f" style="left:135px;top:372px;width:226px;height:20px;background:#ffc0c0"></div>
<div class="f" style="left:135px;top:392px;width:226px;height:20px;background:#fff"></div>
<div class="f" style="left:135px;top:412px;width:226px;height:20px;background:#ffc0c0"></div>
<div class="f" style="left:135px;top:432px;width:226px;height:20px;background:#fff"></div>
<div class="f" style="left:135px;top:452px;width:75px;height:20px;background:#fff"></div>
<div class="g" style="left:62px;top:489px;width:186px;height:99px"></div>
<div style="left:82px;top:489px;width:74px;height:2px;background:#d9d9d9"></div>
<div style="left:66px;top:512px;width:11px;height:51px;background:#cccccc;box-sizing:border-box;border-left:1px solid #fff;border-top:1px solid #fff;border-right:1px solid #d6d6d6"></div>
<svg style="left:65px;top:497px" width="13" height="15" viewBox="0 0 13 15"><path d="M0.5 15 V6.5 A6.0 6.0 0 0 1 12.5 6.5 V15 Z" fill="#cecece" stroke="#8a9dbd" stroke-width="1"/><path d="M1.5 14 V6.5 A5.0 5.0 0 0 1 11.0 2.8" fill="none" stroke="#fff" stroke-width="1.1"/><path d="M1 14.5 H12" stroke="#4f6a94" stroke-width="1"/><path d="M3.5 10.1 H10.9 L7.2 5.7 Z" fill="#4a648f"/></svg>
<svg style="left:65px;top:563px" width="13" height="15" viewBox="0 0 13 15"><path d="M0.5 0 V8.5 A6.0 6.0 0 0 0 12.5 8.5 V0 Z" fill="#cecece" stroke="#8a9dbd" stroke-width="1"/><path d="M1.5 1.5 V8.5 A5.0 5.0 0 0 0 3.5 12.8" fill="none" stroke="#fff" stroke-width="1.1"/><path d="M1 0.5 H12" stroke="#4f6a94" stroke-width="1"/><path d="M1.5 1.5 H11.5" stroke="#fff" stroke-width="1"/><path d="M3.5 5.8 H10.9 L7.2 10.2 Z" fill="#4a648f"/></svg>
<svg style="left:65px;top:497px" width="13" height="81" viewBox="0 0 13 81"><rect x="8" y="36" width="2" height="2" fill="#e6e6e6"/><rect x="8" y="36" width="1" height="1" fill="#fff"/><rect x="9" y="37" width="1" height="1" fill="#8a9cba"/><rect x="3" y="40" width="2" height="2" fill="#e6e6e6"/><rect x="3" y="40" width="1" height="1" fill="#fff"/><rect x="4" y="41" width="1" height="1" fill="#8a9cba"/><rect x="8" y="44" width="2" height="2" fill="#e6e6e6"/><rect x="8" y="44" width="1" height="1" fill="#fff"/><rect x="9" y="45" width="1" height="1" fill="#8a9cba"/></svg>
<div class="f" style="left:78px;top:498px;width:166px;height:20px;background:#ffc0c0"></div>
<div class="f" style="left:78px;top:518px;width:166px;height:20px;background:#ffc0c0"></div>
<div class="f" style="left:78px;top:538px;width:166px;height:20px;background:#ffc0c0"></div>
<div class="f" style="left:78px;top:558px;width:166px;height:20px;background:#ffc0c0"></div>
<div class="g" style="left:252px;top:489px;width:195px;height:99px"></div>
<div style="left:272px;top:489px;width:78px;height:2px;background:#d9d9d9"></div>
<div style="left:257px;top:511px;width:12px;height:52px;background:#cccccc;box-sizing:border-box;border-left:1px solid #fff;border-top:1px solid #fff;border-right:1px solid #d6d6d6"></div>
<svg style="left:256px;top:496px" width="14" height="15" viewBox="0 0 14 15"><path d="M0.5 15 V7.0 A6.5 6.5 0 0 1 13.5 7.0 V15 Z" fill="#cecece" stroke="#8a9dbd" stroke-width="1"/><path d="M1.5 14 V7.0 A5.5 5.5 0 0 1 11.875 2.95" fill="none" stroke="#fff" stroke-width="1.1"/><path d="M1 14.5 H13" stroke="#4f6a94" stroke-width="1"/><path d="M4.0 10.1 H11.4 L7.7 5.7 Z" fill="#4a648f"/></svg>
<svg style="left:256px;top:563px" width="14" height="15" viewBox="0 0 14 15"><path d="M0.5 0 V8.0 A6.5 6.5 0 0 0 13.5 8.0 V0 Z" fill="#cecece" stroke="#8a9dbd" stroke-width="1"/><path d="M1.5 1.5 V8.0 A5.5 5.5 0 0 0 3.75 12.7" fill="none" stroke="#fff" stroke-width="1.1"/><path d="M1 0.5 H13" stroke="#4f6a94" stroke-width="1"/><path d="M1.5 1.5 H12.5" stroke="#fff" stroke-width="1"/><path d="M4.0 5.8 H11.4 L7.7 10.2 Z" fill="#4a648f"/></svg>
<svg style="left:256px;top:496px" width="14" height="82" viewBox="0 0 14 82"><rect x="8" y="36" width="2" height="2" fill="#e6e6e6"/><rect x="8" y="36" width="1" height="1" fill="#fff"/><rect x="9" y="37" width="1" height="1" fill="#8a9cba"/><rect x="3" y="40" width="2" height="2" fill="#e6e6e6"/><rect x="3" y="40" width="1" height="1" fill="#fff"/><rect x="4" y="41" width="1" height="1" fill="#8a9cba"/><rect x="8" y="44" width="2" height="2" fill="#e6e6e6"/><rect x="8" y="44" width="1" height="1" fill="#fff"/><rect x="9" y="45" width="1" height="1" fill="#8a9cba"/></svg>
<div class="f" style="left:270px;top:498px;width:172px;height:20px;background:#ffc0c0"></div>
<div class="f" style="left:270px;top:518px;width:172px;height:20px;background:#ffc0c0"></div>
<div class="f" style="left:270px;top:538px;width:172px;height:20px;background:#ffc0c0"></div>
<div class="f" style="left:270px;top:558px;width:172px;height:20px;background:#ffc0c0"></div>
<div class="g" style="left:391px;top:370px;width:236px;height:89px"></div>
<div style="left:411px;top:370px;width:62px;height:2px;background:#d9d9d9"></div>
<div class="f" style="left:449px;top:386px;width:161px;height:20px;background:#ffc0c0"></div>
<div class="f" style="left:449px;top:407px;width:161px;height:20px;background:#ffc0c0"></div>
<div class="f" style="left:449px;top:427px;width:73px;height:20px;background:#fff"></div>
<svg style="left:590px;top:435px" width="12" height="12" viewBox="0 0 12 12" shape-rendering="crispEdges"><rect x="0" y="0" width="12" height="12" fill="#fff"/><rect x="1" y="10" width="10" height="1" fill="#e2e2e2"/><rect x="10" y="1" width="1" height="10" fill="#e2e2e2"/><rect x="0" y="0" width="10" height="1" fill="#24324d"/><rect x="0" y="0" width="1" height="10" fill="#24324d"/></svg>
<div class="f" style="left:503px;top:509px;width:177px;height:21px;background:#ececec"></div>
<div class="f" style="left:594px;top:534px;width:86px;height:20px;background:#ececec"></div>
<div class="b" style="left:535px;top:571px;width:144px;height:19px"></div>
<div class="g" style="left:687px;top:369px;width:433px;height:225px"></div>
<div style="left:707px;top:369px;width:57px;height:2px;background:#d9d9d9"></div>
<div style="left:693px;top:403px;width:11px;height:149px;background:#cccccc;box-sizing:border-box;border-left:1px solid #fff;border-top:1px solid #fff;border-right:1px solid #d6d6d6"></div>
<svg style="left:692px;top:388px" width="13" height="15" viewBox="0 0 13 15"><path d="M0.5 15 V6.5 A6.0 6.0 0 0 1 12.5 6.5 V15 Z" fill="#cecece" stroke="#8a9dbd" stroke-width="1"/><path d="M1.5 14 V6.5 A5.0 5.0 0 0 1 11.0 2.8" fill="none" stroke="#fff" stroke-width="1.1"/><path d="M1 14.5 H12" stroke="#4f6a94" stroke-width="1"/><path d="M3.5 10.1 H10.9 L7.2 5.7 Z" fill="#4a648f"/></svg>
<svg style="left:692px;top:552px" width="13" height="15" viewBox="0 0 13 15"><path d="M0.5 0 V8.5 A6.0 6.0 0 0 0 12.5 8.5 V0 Z" fill="#cecece" stroke="#8a9dbd" stroke-width="1"/><path d="M1.5 1.5 V8.5 A5.0 5.0 0 0 0 3.5 12.8" fill="none" stroke="#fff" stroke-width="1.1"/><path d="M1 0.5 H12" stroke="#4f6a94" stroke-width="1"/><path d="M1.5 1.5 H11.5" stroke="#fff" stroke-width="1"/><path d="M3.5 5.8 H10.9 L7.2 10.2 Z" fill="#4a648f"/></svg>
<svg style="left:692px;top:388px" width="13" height="179" viewBox="0 0 13 179"><rect x="8" y="69" width="2" height="2" fill="#e6e6e6"/><rect x="8" y="69" width="1" height="1" fill="#fff"/><rect x="9" y="70" width="1" height="1" fill="#8a9cba"/><rect x="3" y="73" width="2" height="2" fill="#e6e6e6"/><rect x="3" y="73" width="1" height="1" fill="#fff"/><rect x="4" y="74" width="1" height="1" fill="#8a9cba"/><rect x="8" y="77" width="2" height="2" fill="#e6e6e6"/><rect x="8" y="77" width="1" height="1" fill="#fff"/><rect x="9" y="78" width="1" height="1" fill="#8a9cba"/><rect x="3" y="81" width="2" height="2" fill="#e6e6e6"/><rect x="3" y="81" width="1" height="1" fill="#fff"/><rect x="4" y="82" width="1" height="1" fill="#8a9cba"/><rect x="8" y="85" width="2" height="2" fill="#e6e6e6"/><rect x="8" y="85" width="1" height="1" fill="#fff"/><rect x="9" y="86" width="1" height="1" fill="#8a9cba"/><rect x="3" y="89" width="2" height="2" fill="#e6e6e6"/><rect x="3" y="89" width="1" height="1" fill="#fff"/><rect x="4" y="90" width="1" height="1" fill="#8a9cba"/><rect x="8" y="93" width="2" height="2" fill="#e6e6e6"/><rect x="8" y="93" width="1" height="1" fill="#fff"/><rect x="9" y="94" width="1" height="1" fill="#8a9cba"/><rect x="3" y="97" width="2" height="2" fill="#e6e6e6"/><rect x="3" y="97" width="1" height="1" fill="#fff"/><rect x="4" y="98" width="1" height="1" fill="#8a9cba"/><rect x="8" y="101" width="2" height="2" fill="#e6e6e6"/><rect x="8" y="101" width="1" height="1" fill="#fff"/><rect x="9" y="102" width="1" height="1" fill="#8a9cba"/></svg>
<div class="f" style="left:707px;top:388px;width:164px;height:20px;background:#80c0ff"></div>
<div class="f" style="left:871px;top:388px;width:76px;height:20px;background:#80c0ff"></div>
<div class="f" style="left:947px;top:388px;width:167px;height:20px;background:#80c0ff"></div>
<div class="f" style="left:707px;top:408px;width:164px;height:20px;background:#ffc0c0"></div>
<div class="f" style="left:871px;top:408px;width:76px;height:20px;background:#ececec"></div>
<div class="f" style="left:947px;top:408px;width:167px;height:20px;background:#ececec"></div>
<div class="f" style="left:707px;top:428px;width:164px;height:20px;background:#ffc0c0"></div>
<div class="f" style="left:871px;top:428px;width:76px;height:20px;background:#ececec"></div>
<div class="f" style="left:947px;top:428px;width:167px;height:20px;background:#ececec"></div>
<div class="f" style="left:707px;top:448px;width:164px;height:20px;background:#ffc0c0"></div>
<div class="f" style="left:871px;top:448px;width:76px;height:20px;background:#ececec"></div>
<div class="f" style="left:947px;top:448px;width:167px;height:20px;background:#ececec"></div>
<div class="f" style="left:707px;top:468px;width:164px;height:20px;background:#ffc0c0"></div>
<div class="f" style="left:871px;top:468px;width:76px;height:20px;background:#ececec"></div>
<div class="f" style="left:947px;top:468px;width:167px;height:20px;background:#ececec"></div>
<div class="f" style="left:707px;top:488px;width:164px;height:20px;background:#ffc0c0"></div>
<div class="f" style="left:871px;top:488px;width:76px;height:20px;background:#ececec"></div>
<div class="f" style="left:947px;top:488px;width:167px;height:20px;background:#ececec"></div>
<div class="f" style="left:707px;top:508px;width:164px;height:20px;background:#ffc0c0"></div>
<div class="f" style="left:871px;top:508px;width:76px;height:20px;background:#ececec"></div>
<div class="f" style="left:947px;top:508px;width:167px;height:20px;background:#ececec"></div>
<div class="f" style="left:707px;top:528px;width:164px;height:20px;background:#ffc0c0"></div>
<div class="f" style="left:871px;top:528px;width:76px;height:20px;background:#ececec"></div>
<div class="f" style="left:947px;top:528px;width:167px;height:20px;background:#ececec"></div>
<div class="f" style="left:707px;top:548px;width:164px;height:20px;background:#ffc0c0"></div>
<div class="f" style="left:871px;top:548px;width:76px;height:20px;background:#ececec"></div>
<div class="f" style="left:947px;top:548px;width:167px;height:20px;background:#ececec"></div>
<div class="b" style="left:729px;top:572px;width:129px;height:19px"></div>
<div class="b" style="left:946px;top:572px;width:115px;height:19px"></div>
<div class="b" style="left:80px;top:607px;width:92px;height:19px"></div>
<div class="b" style="left:259px;top:607px;width:80px;height:19px"></div>
<div class="b" style="left:360px;top:607px;width:80px;height:19px"></div>
<div class="b" style="left:1048px;top:607px;width:74px;height:19px"></div>
<span class="t" style="left:18.3px;top:0.5px;font-size:12px;color:#fff;letter-spacing:0.181px;">00361</span>
<span class="t" style="left:56.3px;top:0.5px;font-size:12px;color:#fff;">-</span>
<span class="t" style="left:63.6px;top:0.5px;font-size:12px;color:#fff;letter-spacing:0.067px;">Administrace</span>
<span class="t" style="left:138.7px;top:0.5px;font-size:12px;color:#fff;letter-spacing:0.024px;">elektronické</span>
<span class="t" style="left:206.8px;top:0.5px;font-size:12px;color:#fff;letter-spacing:0.034px;">úřední</span>
<span class="t" style="left:244.8px;top:0.5px;font-size:12px;color:#fff;letter-spacing:0.060px;">desky</span>
<span class="t" style="left:279.6px;top:0.5px;font-size:12px;color:#fff;">-</span>
<span class="t" style="left:287.7px;top:0.5px;font-size:12px;color:#fff;letter-spacing:-0.055px;">správce</span>
<span class="t" style="left:333.4px;top:0.5px;font-size:12px;color:#fff;letter-spacing:-0.274px;">(EUDSPR)</span>
<span class="t" style="left:395.3px;top:0.5px;font-size:12px;color:#fff;">-</span>
<span class="t" style="left:402.6px;top:0.5px;font-size:12px;color:#fff;letter-spacing:-0.149px;">[23.05.2022;</span>
<span class="t" style="left:473.7px;top:0.5px;font-size:12px;color:#fff;letter-spacing:0.025px;">07:36]</span>
<span class="t" style="left:513.8px;top:0.5px;font-size:12px;color:#fff;">[ ]</span>
<span class="t" style="left:528.9px;top:0.5px;font-size:12px;color:#fff;">[ ]</span>
<span class="t" style="left:15px;top:26px;font-size:11px;color:#7d94bd;text-shadow:1px 1px 0 #fff;">Nav</span>
<span class="t" style="left:84px;top:25px;font-size:11px;color:#000;font-weight:bold;letter-spacing:0.184px;">Seznam</span>
<span class="t" style="left:165.5px;top:35.5px;font-size:11px;color:#000;font-weight:bold;">Vše</span>
<span class="t" style="left:165px;top:57.5px;font-size:11px;color:#008000;font-weight:bold;letter-spacing:0.490px;">Zveřejněné</span>
<span class="t" style="left:286px;top:36.5px;font-size:11px;color:#ee00ee;font-weight:bold;letter-spacing:0.307px;">Svěšené</span>
<span class="t" style="left:285.5px;top:56.5px;font-size:11px;color:#ff0000;font-weight:bold;letter-spacing:0.534px;">Zrušené</span>
<span class="t" style="left:392.5px;top:36.5px;font-size:11px;color:#000;font-weight:bold;letter-spacing:0.299px;">V přípravě</span>
<span class="t" style="left:392.5px;top:56.5px;font-size:11px;color:#ff8000;font-weight:bold;letter-spacing:0.369px;">Nezveřejněné</span>
<span class="t" style="left:575px;top:38px;font-size:11px;color:#000;font-weight:bold;letter-spacing:0.010px;">Schválené</span>
<span class="t" style="left:574.5px;top:58px;font-size:11px;color:#000;font-weight:bold;letter-spacing:0.173px;">Neschválené</span>
<span class="t" style="left:675px;top:45.5px;font-size:11px;color:#000;font-weight:bold;letter-spacing:0.219px;">Kategorie</span>
<span class="t" style="left:737px;top:46.5px;font-size:11px;color:#000;letter-spacing:-0.009px;">-Neuvedeno-</span>
<span class="t" style="left:908.5px;top:45.5px;font-size:11px;color:#000;font-weight:bold;letter-spacing:0.149px;">Pracoviště</span>
<span class="t" style="left:975px;top:46.5px;font-size:11px;color:#000;letter-spacing:-0.009px;">-Neuvedeno-</span>
<span class="t" style="left:116.5px;top:83px;font-size:11px;color:#000;font-weight:bold;">PID</span>
<span class="t" style="left:233.5px;top:83px;font-size:11px;color:#000;font-weight:bold;letter-spacing:-0.199px;">Název</span>
<span class="t" style="left:390.5px;top:83px;font-size:11px;color:#000;font-weight:bold;letter-spacing:0.178px;">Číslo jednací</span>
<span class="t" style="left:496.5px;top:83px;font-size:11px;color:#000;font-weight:bold;letter-spacing:0.688px;">Verze</span>
<span class="t" style="left:536px;top:83px;font-size:11px;color:#000;font-weight:bold;letter-spacing:0.264px;">Vyvěsit od</span>
<span class="t" style="left:622.5px;top:83px;font-size:11px;color:#000;font-weight:bold;letter-spacing:0.184px;">Vyvěsit Do</span>
<span class="t" style="left:708.5px;top:83px;font-size:11px;color:#000;font-weight:bold;">Dnů</span>
<span class="t" style="left:755px;top:83px;font-size:11px;color:#000;font-weight:bold;letter-spacing:-0.004px;">Schváleno</span>
<span class="t" style="left:819px;top:83px;font-size:11px;color:#000;font-weight:bold;letter-spacing:0.124px;">Spisový uzel</span>
<span class="t" style="left:1018.5px;top:83px;font-size:11px;color:#000;font-weight:bold;letter-spacing:0.156px;">Kategorie</span>
<span class="t" style="left:119px;top:104px;font-size:11px;color:#000;letter-spacing:0.007px;">2022VVS00010S</span>
<span class="t" style="left:236px;top:104px;font-size:11px;color:#000;letter-spacing:-0.211px;">Náhradní doručení 1</span>
<span class="t" style="left:393px;top:104px;font-size:11px;color:#000;letter-spacing:0.007px;">2022VVS00010S</span>
<span class="t" style="left:538px;top:104px;font-size:11px;color:#000;letter-spacing:-0.118px;">18.05.2022</span>
<span class="t" style="left:625px;top:104px;font-size:11px;color:#000;letter-spacing:-0.118px;">31.05.2022</span>
<span class="t" style="left:711px;top:104px;font-size:11px;color:#000;">14</span>
<span class="t" style="left:756px;top:104px;font-size:11px;color:#000;letter-spacing:-0.118px;">19.05.2022</span>
<span class="t" style="left:1021px;top:104px;font-size:11px;color:#000;letter-spacing:-0.100px;">Hospodaření</span>
<span class="t" style="left:119px;top:124px;font-size:11px;color:#000;letter-spacing:0.076px;">2022VVS00011S</span>
<span class="t" style="left:236px;top:124px;font-size:11px;color:#000;letter-spacing:-0.183px;">Náhradní doručení 2</span>
<span class="t" style="left:393px;top:124px;font-size:11px;color:#000;letter-spacing:0.076px;">2022VVS00011S</span>
<span class="t" style="left:499px;top:124px;font-size:11px;color:#000;">1</span>
<span class="t" style="left:538px;top:124px;font-size:11px;color:#000;letter-spacing:-0.118px;">17.05.2022</span>
<span class="t" style="left:625px;top:124px;font-size:11px;color:#000;letter-spacing:-0.118px;">31.05.2022</span>
<span class="t" style="left:711px;top:124px;font-size:11px;color:#000;">15</span>
<span class="t" style="left:821px;top:124px;font-size:11px;color:#000;letter-spacing:-0.260px;">Ekonomické oddělení</span>
<span class="t" style="left:1021px;top:124px;font-size:11px;color:#000;letter-spacing:-0.393px;">Studium</span>
<span class="t" style="left:83.5px;top:351px;font-size:11px;color:#000;font-weight:bold;letter-spacing:-0.194px;">Detail</span>
<span class="t" style="left:99.5px;top:370px;font-size:11px;color:#000;font-weight:bold;letter-spacing:-0.199px;">Název</span>
<span class="t" style="left:112.9px;top:390px;font-size:11px;color:#000;font-weight:bold;">PID</span>
<span class="t" style="left:61.5px;top:410px;font-size:11px;color:#000;font-weight:bold;letter-spacing:0.095px;">Číslo jednací</span>
<span class="t" style="left:79px;top:430px;font-size:11px;color:#000;font-weight:bold;letter-spacing:0.083px;">Spis. uzel</span>
<span class="t" style="left:99px;top:450px;font-size:11px;color:#000;font-weight:bold;letter-spacing:0.688px;">Verze</span>
<span class="t" style="left:138px;top:372px;font-size:11px;color:#000;letter-spacing:-0.155px;">Náhradní doručení 2</span>
<span class="t" style="left:138px;top:392px;font-size:11px;color:#000;letter-spacing:0.076px;">2022VVS00011S</span>
<span class="t" style="left:138px;top:412px;font-size:11px;color:#000;letter-spacing:0.076px;">2022VVS00011S</span>
<span class="t" style="left:138px;top:432px;font-size:11px;color:#000;letter-spacing:-0.260px;">Ekonomické oddělení</span>
<span class="t" style="left:138px;top:452px;font-size:11px;color:#000;">1</span>
<span class="t" style="left:92px;top:480px;font-size:11px;color:#000;font-weight:bold;letter-spacing:0.281px;">Kategorie</span>
<span class="t" style="left:81px;top:498px;font-size:11px;color:#000;letter-spacing:-0.393px;">Studium</span>
<span class="t" style="left:282.5px;top:480px;font-size:11px;color:#000;font-weight:bold;letter-spacing:0.149px;">Pracoviště</span>
<span class="t" style="left:273px;top:498px;font-size:11px;color:#000;letter-spacing:-0.089px;">Skupina pracovišť 13</span>
<span class="t" style="left:421px;top:360px;font-size:11px;color:#000;font-weight:bold;letter-spacing:0.562px;">Vyvěsit</span>
<span class="t" style="left:430.4px;top:383.5px;font-size:11px;color:#000;font-weight:bold;">Od</span>
<span class="t" style="left:431.0px;top:404.5px;font-size:11px;color:#000;font-weight:bold;">Do</span>
<span class="t" style="left:424.3px;top:425.5px;font-size:11px;color:#000;font-weight:bold;">Dnů</span>
<span class="t" style="left:452px;top:385px;font-size:11px;color:#000;letter-spacing:-0.062px;">17.05.2022</span>
<span class="t" style="left:452px;top:406.5px;font-size:11px;color:#000;letter-spacing:-0.062px;">31.05.2022</span>
<span class="t" style="left:452px;top:427px;font-size:11px;color:#000;">15</span>
<span class="t" style="left:547.5px;top:435px;font-size:11px;color:#000;font-weight:bold;letter-spacing:0.688px;">Zrušit</span>
<span class="t" style="left:459px;top:507px;font-size:11px;color:#000;font-weight:bold;letter-spacing:-0.225px;">Schválil</span>
<span class="t" style="left:511px;top:532px;font-size:11px;color:#000;font-weight:bold;letter-spacing:0.030px;">Schváleno dne</span>
<span class="t" style="left:559.5px;top:571px;font-size:11px;color:#000;letter-spacing:-0.163px;">Schválit a zamknout</span>
<span class="t" style="left:717px;top:360px;font-size:11px;color:#000;font-weight:bold;letter-spacing:0.117px;">Přílohy</span>
<span class="t" style="left:773px;top:366.5px;font-size:11px;color:#000;font-weight:bold;letter-spacing:0.051px;">Název</span>
<span class="t" style="left:886px;top:366.5px;font-size:11px;color:#000;font-weight:bold;letter-spacing:0.703px;">Velikost</span>
<span class="t" style="left:1020.5px;top:366.5px;font-size:11px;color:#000;font-weight:bold;">Typ</span>
<span class="t" style="left:710px;top:388px;font-size:11px;color:#000;letter-spacing:-0.234px;">Dokument_5.txt</span>
<span class="t" style="left:874px;top:388px;font-size:11px;color:#000;">12</span>
<span class="t" style="left:950px;top:388px;font-size:11px;color:#000;letter-spacing:-0.121px;">text/plain; charset=ISO-8859-2</span>
<span class="t" style="left:760px;top:570.5px;font-size:11px;color:#000;letter-spacing:-0.209px;">Nahrát přílohu</span>
<span class="t" style="left:974px;top:570.5px;font-size:11px;color:#000;letter-spacing:-0.251px;">Ukaž přílohu</span>
<span class="t" style="left:93.5px;top:606.5px;font-size:11px;color:#000;letter-spacing:-0.064px;">Nový záznam</span>
<span class="t" style="left:268px;top:606.5px;font-size:11px;color:#000;letter-spacing:-0.131px;">čís. Kategorií</span>
<span class="t" style="left:367.5px;top:606.5px;font-size:11px;color:#000;letter-spacing:-0.076px;">čís. Pracovišť</span>
<span class="t" style="left:1067.5px;top:606.5px;font-size:11px;color:#000;letter-spacing:-0.114px;">Historie</span>
</body></html>
